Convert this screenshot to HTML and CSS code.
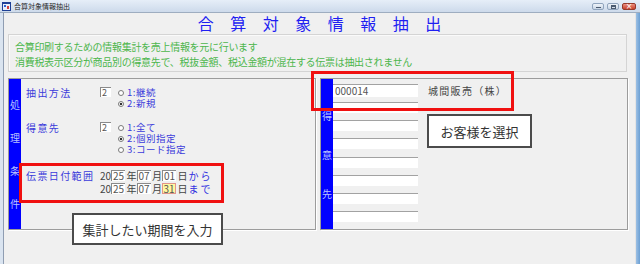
FILE: index.html
```html
<!DOCTYPE html>
<html lang="ja">
<head>
<meta charset="utf-8">
<title>合算対象情報抽出</title>
<link rel="stylesheet" href="styles.css">
</head>
<body>
<div class="window">
  <div class="titlebar">
    <svg class="app-icon" viewBox="0 0 9 9" width="9" height="9">
      <rect x="0" y="0" width="9" height="9" fill="#1d3f95"/>
      <rect x="1" y="2" width="7" height="6" fill="#e8eefa"/>
      <rect x="2" y="3" width="2" height="2" fill="#2b5fd0"/>
      <rect x="5" y="4" width="2" height="3" fill="#d04040"/>
    </svg>
    <span class="caption">合算対象情報抽出</span>
    <div class="win-buttons">
      <span class="wbtn"><i class="glyph-min"></i></span>
      <span class="wbtn"><i class="glyph-max"></i></span>
      <span class="wbtn close"><i class="glyph-close">×</i></span>
    </div>
  </div>
  <div class="frame-row">
    <div class="frame-left"></div>
    <main class="client">
      <h1 class="page-title">合算対象情報抽出</h1>
      <div class="notice">
        <p>合算印刷するための情報集計を売上情報を元に行います</p>
        <p>消費税表示区分が商品別の得意先で、税抜金額、税込金額が混在する伝票は抽出されません</p>
      </div>
      <div class="panels">
        <section class="panel">
          <div class="side-bar bar-cond"><span>処</span><span>理</span><span>条</span><span>件</span></div>
          <div class="panel-body">
            <div class="field-group">
              <span class="label">抽出方法</span>
              <span class="code-box">2</span>
              <ul class="radios">
                <li><i class="radio"></i>1:継続</li>
                <li><i class="radio on"></i>2:新規</li>
              </ul>
            </div>
            <div class="field-group g2">
              <span class="label">得意先</span>
              <span class="code-box">2</span>
              <ul class="radios">
                <li><i class="radio"></i>1:全て</li>
                <li><i class="radio on"></i>2:個別指定</li>
                <li><i class="radio"></i>3:コード指定</li>
              </ul>
            </div>
            <div class="field-group g-date">
              <span class="label date-label">伝票日付範囲</span>
              <div class="date-lines">
                <div class="date-line"><span class="d-cent">20</span><span class="dbox">25</span><span class="unit">年</span><span class="dbox">07</span><span class="unit">月</span><span class="dbox">01</span><span class="unit">日</span><span class="suffix">から</span></div>
                <div class="date-line"><span class="d-cent">20</span><span class="dbox">25</span><span class="unit">年</span><span class="dbox">07</span><span class="unit">月</span><span class="dbox hl">31</span><span class="unit">日</span><span class="suffix">まで</span></div>
              </div>
            </div>
          </div>
        </section>
        <section class="panel">
          <div class="side-bar bar-cust"><span>得</span><span>意</span><span>先</span></div>
          <div class="cust-list">
            <div class="cust-row"><span class="cust-field first">000014</span><span class="cust-name">城間販売（株）</span></div>
            <div class="cust-row"><span class="cust-field"></span></div>
            <div class="cust-row"><span class="cust-field"></span></div>
            <div class="cust-row"><span class="cust-field"></span></div>
            <div class="cust-row"><span class="cust-field"></span></div>
            <div class="cust-row"><span class="cust-field"></span></div>
            <div class="cust-row"><span class="cust-field"></span></div>
            <div class="cust-row"><span class="cust-field"></span></div>
          </div>
        </section>
      </div>
    </main>
    <div class="frame-right"></div>
  </div>

  <div class="mark mark-cust"></div>
  <div class="mark mark-date"></div>
  <div class="callout callout-cust">お客様を選択</div>
  <div class="callout callout-date">集計したい期間を入力</div>
</div>
</body>
</html>
```

FILE: styles.css
```css
* {
  box-sizing: border-box;
  margin: 0;
  padding: 0;
}

html, body {
  width: 640px;
  height: 264px;
  overflow: hidden;
}

body {
  background: #f0f0f0;
  font-family: "Noto Sans CJK JP", "Noto Sans", sans-serif;
}

.window {
  position: relative;
  width: 640px;
  height: 264px;
  display: flex;
  flex-direction: column;
  background: #dbe5f1;
}

/* title bar */
.titlebar {
  height: 13px;
  flex: none;
  display: flex;
  align-items: flex-start;
  padding: 2px 0 0 2px;
  background: linear-gradient(#e6eef8, #cddaeb);
  border-bottom: 1px solid #9eadc0;
}

.app-icon {
  display: block;
  flex: none;
}

.caption {
  margin-left: 3px;
  font-size: 7px;
  line-height: 9px;
  color: #1e1e1e;
}

.win-buttons {
  margin-left: auto;
  margin-right: 4px;
  margin-top: 1px;
  display: flex;
  gap: 3px;
}

.wbtn {
  width: 12px;
  height: 7px;
  border: 1px solid #90a4bd;
  border-radius: 2px;
  background: linear-gradient(#eef3f9, #c8d5e5);
  display: flex;
  align-items: center;
  justify-content: center;
}

.wbtn.close {
  width: 14px;
  border-color: #94392c;
  background: linear-gradient(#ec8f80, #c8402c);
}

.glyph-min {
  width: 5px;
  height: 1px;
  background: #4a5a70;
  margin-top: 2px;
}

.glyph-max {
  width: 5px;
  height: 4px;
  border: 1px solid #4a5a70;
  border-top-width: 2px;
}

.glyph-close {
  font-style: normal;
  font-size: 8px;
  line-height: 6px;
  color: #fff;
  font-family: "DejaVu Sans", sans-serif;
}

/* frame */
.frame-row {
  flex: 1;
  display: flex;
}

.frame-left {
  width: 4px;
  flex: none;
  background: #dae4f0;
  border-right: 1px solid #8f9db2;
}

.frame-right {
  width: 5px;
  flex: none;
  background: linear-gradient(90deg, #e4e4e4 0 1px, #9dc0e4 1px, #6b9fd3);
}

.client {
  flex: 1;
  background: #f0f0f0;
}

/* heading */
.page-title {
  height: 21px;
  font-size: 16px;
  line-height: 21px;
  font-weight: normal;
  color: #1f1ff2;
  letter-spacing: 16.5px;
  text-align: center;
  padding-left: 16.5px;
}

/* notice */
.notice {
  margin-left: 4px;
  width: 619px;
  height: 38px;
  border: 1px solid #d4d4d4;
  box-shadow: inset 1px 1px 0 #fafafa;
  padding: 4px 0 0 6px;
  font-size: 10px;
  line-height: 15px;
  color: #4cb64c;
  letter-spacing: -0.3px;
}

/* panels */
.panels {
  display: flex;
  gap: 4px;
  margin: 6px 0 0 4px;
}

.panel {
  width: 308px;
  height: 152px;
  border: 1px solid #9c9c9c;
  box-shadow: 1px 1px 0 #ffffff;
  display: flex;
}

.side-bar {
  width: 12px;
  flex: none;
  background: #0000ff;
  color: #b9c0ff;
  font-size: 10px;
  display: flex;
  flex-direction: column;
  align-items: center;
  justify-content: center;
}

.bar-cond span {
  line-height: 33px;
}

.bar-cust span {
  line-height: 39px;
}

.panel-body {
  padding: 8px 0 0 5px;
  display: flex;
  flex-direction: column;
}

.field-group {
  display: flex;
  align-items: flex-start;
}

.g2 {
  margin-top: 13px;
}

.g-date {
  margin-top: 14px;
}

.label {
  width: 74px;
  flex: none;
  font-size: 10px;
  line-height: 11px;
  color: #3b3bdb;
  letter-spacing: 1.4px;
}

.date-label {
  line-height: 13px;
}

.code-box {
  width: 11px;
  height: 10px;
  flex: none;
  background: #fff;
  border-top: 1px solid #8a8a8a;
  border-left: 1px solid #8a8a8a;
  font-size: 9px;
  line-height: 9px;
  color: #555;
  padding-left: 1px;
}

.radios {
  list-style: none;
  margin-left: 7px;
  font-size: 9.5px;
  line-height: 11px;
  color: #3b3bdb;
  letter-spacing: 0.5px;
}

.radios li {
  display: flex;
  align-items: center;
  gap: 3px;
}

.radio {
  width: 6px;
  height: 6px;
  border: 1px solid #7a7a7a;
  border-radius: 50%;
  background: #fff;
}

.radio.on {
  background: radial-gradient(circle, #333 0 1.3px, #fff 1.6px);
}

/* dates */
.date-lines {
  display: flex;
  flex-direction: column;
}

.date-line {
  height: 13px;
  display: flex;
  align-items: center;
  font-size: 10px;
  color: #444;
}

.d-cent {
  width: 11px;
}

.dbox {
  width: 14px;
  height: 11px;
  background: #fff;
  border-top: 1px solid #8a8a8a;
  border-left: 1px solid #8a8a8a;
  line-height: 10px;
  text-align: center;
  color: #555;
}

.dbox.hl {
  background: #fff7a0;
  border: 1px solid #e2958a;
}

.unit {
  width: 10px;
  margin-left: 1.5px;
}

.suffix {
  margin-left: 1px;
  color: #2f2fe0;
  letter-spacing: 2px;
}

/* customer list */
.cust-list {
  padding-top: 5px;
  display: flex;
  flex-direction: column;
}

.cust-row {
  height: 18.43px;
  display: flex;
  align-items: flex-start;
}

.cust-field {
  width: 85px;
  height: 11px;
  background: #fff;
  border-top: 1px solid #a2a2a2;
  font-size: 10px;
  line-height: 11px;
  color: #555;
  padding-left: 2px;
}

.cust-field.first {
  height: 13px;
}

.cust-name {
  margin-left: 10px;
  margin-top: 1px;
  font-size: 10px;
  line-height: 12px;
  color: #444;
  letter-spacing: 1.3px;
}

/* annotations */
.mark {
  position: absolute;
  border: 3px solid #f01010;
}

.mark-cust {
  left: 311px;
  top: 71px;
  width: 203px;
  height: 40px;
}

.mark-date {
  left: 19px;
  top: 163px;
  width: 205px;
  height: 40px;
}

.callout {
  position: absolute;
  background: #fff;
  border: 2px solid #4b4b4b;
  font-size: 13px;
  color: #333;
  display: flex;
  align-items: center;
  justify-content: center;
}

.callout-cust {
  left: 427px;
  top: 114px;
  width: 105px;
  height: 34px;
}

.callout-date {
  left: 72px;
  top: 213px;
  width: 151px;
  height: 32px;
}
```
